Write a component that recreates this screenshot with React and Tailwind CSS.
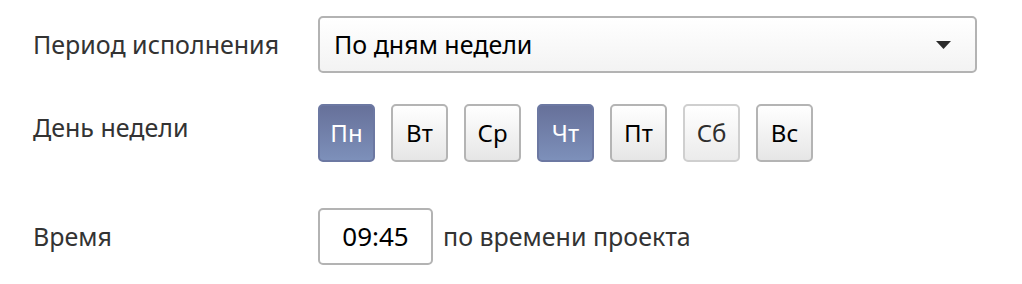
import React from "react";

const days = [
  { label: "Пн", state: "active" },
  { label: "Вт", state: "idle" },
  { label: "Ср", state: "idle" },
  { label: "Чт", state: "active" },
  { label: "Пт", state: "idle" },
  { label: "Сб", state: "muted" },
  { label: "Вс", state: "idle" },
];

const dayClass = {
  active:
    "bg-gradient-to-b from-[#67719a] to-[#7d90ba] border-[#6c78a2] text-white",
  idle: "bg-gradient-to-b from-white to-[#e6e6e6] border-[#b4b4b4] text-black",
  muted: "bg-gradient-to-b from-white to-[#ebebeb] border-[#cfcfcf] text-[#2e2e2e]",
};

const App = () => {
  return (
    <div className="w-[1022px] h-[284px] bg-white pt-[16px] pl-[33px] font-['Noto_Sans',sans-serif]">
      <div className="flex items-center">
        <div className="w-[285px] text-[25px] text-[#333]">Период исполнения</div>
        <div className="w-[659px] h-[57px] flex items-center justify-between pl-[14px] pr-[24px] border-2 border-[#b3b3b3] rounded-[5px] bg-gradient-to-b from-white to-[#f3f3f3]">
          <span className="text-[25px] text-black">По дням недели</span>
          <svg width="15" height="8" viewBox="0 0 15 8">
            <path d="M0 0h15L7.5 8z" fill="#2b2b2b" />
          </svg>
        </div>
      </div>

      <div className="flex items-center mt-[31px]">
        <div className="w-[285px] pb-[10px] text-[25px] text-[#333]">День недели</div>
        <div className="flex gap-[16px]">
          {days.map((d) => (
            <div
              key={d.label}
              className={`w-[57px] h-[58px] flex items-center justify-center rounded-[5px] border-2 text-[24px] ${dayClass[d.state]}`}
            >
              {d.label}
            </div>
          ))}
        </div>
      </div>

      <div className="flex items-center mt-[46px]">
        <div className="w-[285px] text-[25px] text-[#333]">Время</div>
        <div className="w-[115px] h-[57px] flex items-center justify-center border-2 border-[#b3b3b3] rounded-[5px] bg-white text-[26px] text-black">
          09:45
        </div>
        <span className="ml-[10px] text-[25px] text-[#333]">по времени проекта</span>
      </div>
    </div>
  );
};

export default App;
